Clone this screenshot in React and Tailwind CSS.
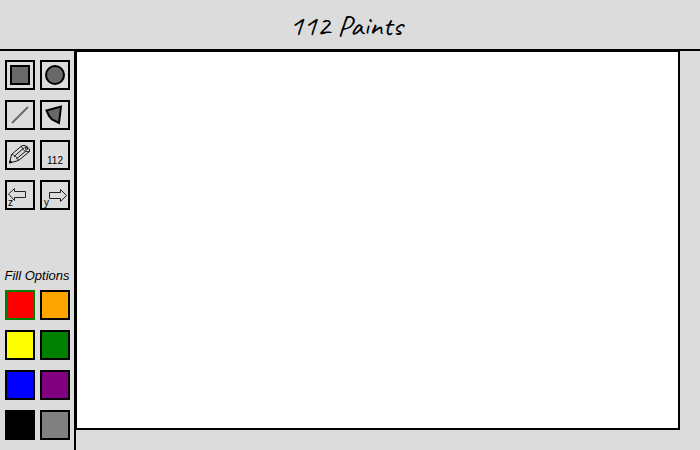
import React, { useState } from "react";

const ink = { stroke: "#000", strokeLinejoin: "miter" };

const tools = [
  {
    name: "Rectangle",
    art: <rect x="4" y="4" width="18" height="18" fill="#696969" strokeWidth="2" {...ink} />,
  },
  {
    name: "Oval",
    art: <circle cx="13" cy="13" r="9" fill="#696969" strokeWidth="2" {...ink} />,
  },
  {
    name: "Line",
    art: <path d="M5 21 21 5" fill="none" stroke="#696969" strokeWidth="2" />,
  },
  {
    name: "Polygon",
    art: <path d="M4.5 8.5 19 4.5 17 21 10 17.5 7 14Z" fill="#696969" strokeWidth="2" {...ink} />,
  },
  {
    name: "Pencil",
    art: (
      <g fill="none" stroke="#111" strokeWidth="1" strokeLinejoin="round">
        <path d="M2.5 21 4.5 12.5 14.5 4C17 2 23.5 5.5 22.5 9.5L11.5 18.5Z" />
        <path d="M4.5 12.5C6 12.3 7.3 13 7.3 14.3 9 14.3 10 15.3 9.8 16.6 11 16.6 11.6 17.4 11.5 18.5" />
        <path d="M7.3 14.3 16.8 6M9.8 16.6 19.4 8.6M14.5 4C15.5 8 18.5 10.5 22.5 9.5" />
        <ellipse cx="19.3" cy="6.2" rx="1.5" ry="0.9" transform="rotate(45 19.3 6.2)" />
        <path d="M2.5 21 3 18.8 4.8 20Z" fill="#111" />
      </g>
    ),
  },
  { name: "Text", label: "112", place: "justify-center pb-[2px]" },
  {
    name: "Undo",
    label: "z",
    place: "justify-start pl-[1px]",
    art: <path d="M1.5 12 7.5 6.5V9.5H18.5V15.5H7.5V18.5Z" fill="none" stroke="#222" strokeWidth="1" />,
  },
  {
    name: "Redo",
    label: "y",
    place: "justify-start pl-[2px]",
    art: <path d="M24.5 13.5 18.5 7.5V10.5H7.5V16.5H18.5V19.5Z" fill="none" stroke="#222" strokeWidth="1" />,
  },
];

const colors = [
  ["Red", "bg-[#ff0000]"],
  ["Orange", "bg-[#ffa500]"],
  ["Yellow", "bg-[#ffff00]"],
  ["Green", "bg-[#008000]"],
  ["Blue", "bg-[#0000ff]"],
  ["Purple", "bg-[#800080]"],
  ["Black", "bg-black"],
  ["Gray", "bg-[#808080]"],
];

function ToolButton({ tool }) {
  return (
    <button
      type="button"
      aria-label={tool.name}
      className="relative flex size-[30px] items-end border-2 border-black"
    >
      {tool.art && (
        <svg viewBox="0 0 26 26" className="absolute inset-0 size-full" aria-hidden="true">
          {tool.art}
        </svg>
      )}
      {tool.label && (
        <span className={`relative flex w-full text-[10px] leading-[10px] ${tool.place}`}>{tool.label}</span>
      )}
    </button>
  );
}

export default function App() {
  const [fill, setFill] = useState("Red");

  return (
    <div className="flex min-h-screen flex-col bg-[#dcdcdc] font-['Liberation_Sans',Arial,sans-serif] text-black">
      <header className="flex h-[51px] items-center justify-center border-b-2 border-black pr-2">
        <h1 className="font-[Caveat,Lato,cursive] text-[30px] leading-8">112 Paints</h1>
      </header>
      <div className="flex flex-1">
        <aside className="flex w-[76px] shrink-0 flex-col justify-between border-r-2 border-black pt-[9px] pb-[10px]">
          <div className="grid grid-cols-[30px_30px] gap-x-[5px] gap-y-[10px] pl-[5px]">
            {tools.map((tool) => (
              <ToolButton key={tool.name} tool={tool} />
            ))}
          </div>
          <section>
            <h2 className="mb-[6px] text-center text-[13px] leading-4 whitespace-nowrap italic">Fill Options</h2>
            <div className="grid grid-cols-[30px_30px] gap-x-[5px] gap-y-[10px] pl-[5px]">
              {colors.map(([name, bg]) => (
                <button
                  key={name}
                  type="button"
                  aria-label={name}
                  aria-pressed={fill === name}
                  onClick={() => setFill(name)}
                  className={`size-[30px] border-2 ${bg} ${fill === name ? "border-[#008000]" : "border-black"}`}
                />
              ))}
            </div>
          </section>
        </aside>
        <main className="flex flex-1 pr-5 pb-5">
          <div className="flex-1 border-t border-r-2 border-b-2 border-l border-black bg-white" />
        </main>
      </div>
    </div>
  );
}
